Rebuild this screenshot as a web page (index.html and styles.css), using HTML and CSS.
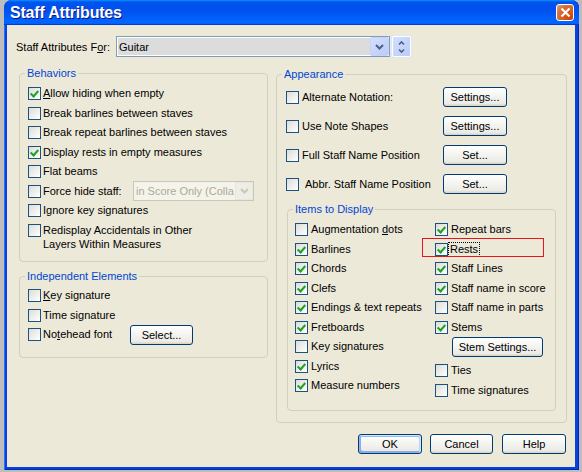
FILE: index.html
```html
<!DOCTYPE html>
<html lang="en">
<head>
    <meta charset="UTF-8">
    <title>Staff Attributes</title>
    <link rel="stylesheet" href="styles.css">
</head>
<body>

    <div class="window">
        <!-- Title bar -->
        <div class="titlebar">
            <span class="title">Staff Attributes</span>
            <span class="close">
                <svg width="11" height="11" viewBox="0 0 11 11"><path d="M1.5 1.5L9.5 9.5M9.5 1.5L1.5 9.5" stroke="#fff" stroke-width="2.2"/></svg>
            </span>
        </div>

        <div class="client">
            <!-- Staff selector -->
            <div class="for-row">
                <span class="for-label">Staff Attributes F<u>o</u>r:</span>
                <div class="combo">
                    <span class="combo-text">Guitar</span>
                    <span class="drop">
                        <svg width="9" height="6" viewBox="0 0 9 6"><path d="M1 1L4.5 4.5L8 1" fill="none" stroke="#4d6185" stroke-width="2"/></svg>
                    </span>
                </div>
                <div class="spin">
                    <svg width="9" height="14" viewBox="0 0 9 14"><path d="M2 4.5L4.5 2L7 4.5M2 9.5L4.5 12L7 9.5" fill="none" stroke="#4d6185" stroke-width="1.6"/></svg>
                </div>
            </div>

            <div class="columns">
                <!-- Left column -->
                <div class="col col-left">
                    <fieldset class="group behaviors">
                        <legend>Behaviors</legend>
                        <div class="group-body">
                            <div class="row"><span class="box on"></span><span class="txt"><u>A</u>llow hiding when empty</span></div>
                            <div class="row"><span class="box"></span><span class="txt">Break barlines between staves</span></div>
                            <div class="row"><span class="box"></span><span class="txt">Break repeat barlines between staves</span></div>
                            <div class="row"><span class="box on"></span><span class="txt">Display rests in empty measures</span></div>
                            <div class="row"><span class="box"></span><span class="txt">Flat beams</span></div>
                            <div class="row"><span class="box"></span><span class="txt force-label">Force hide staff:</span>
                                <div class="combo-off">
                                    <span class="combo-off-text">in Score Only (Colla</span>
                                    <span class="drop-off">
                                        <svg width="9" height="6" viewBox="0 0 9 6"><path d="M1 1L4.5 4.5L8 1" fill="none" stroke="#c9c7ba" stroke-width="2"/></svg>
                                    </span>
                                </div>
                            </div>
                            <div class="row"><span class="box"></span><span class="txt">Ignore key signatures</span></div>
                            <div class="row tall"><span class="box"></span><span class="txt multi">Redisplay Accidentals in Other<br>Layers Within Measures</span></div>
                        </div>
                    </fieldset>

                    <fieldset class="group independent">
                        <legend>Independent Elements</legend>
                        <div class="group-body">
                            <div class="row"><span class="box"></span><span class="txt"><u>K</u>ey signature</span></div>
                            <div class="row"><span class="box"></span><span class="txt">Time signature</span></div>
                            <div class="row"><span class="box"></span><span class="txt note-label">No<u>t</u>ehead font</span><span class="btn btn-select">Select...</span></div>
                        </div>
                    </fieldset>
                </div>

                <!-- Right column -->
                <div class="col col-right">
                    <fieldset class="group appearance">
                        <legend>Appearance</legend>
                        <div class="group-body">
                            <div class="app-rows">
                                <div class="app-row"><span class="chk"><span class="box"></span><span class="txt">Alternate Notation:</span></span><span class="btn">Settings...</span></div>
                                <div class="app-row"><span class="chk"><span class="box"></span><span class="txt">Use Note Shapes</span></span><span class="btn">Settings...</span></div>
                                <div class="app-row"><span class="chk"><span class="box"></span><span class="txt">Full Staff Name Position</span></span><span class="btn">Set...</span></div>
                                <div class="app-row"><span class="chk"><span class="box"></span><span class="txt abbr">Abbr. Staff Name Position</span></span><span class="btn">Set...</span></div>
                            </div>

                            <fieldset class="group items">
                                <legend>Items to Display</legend>
                                <div class="group-body items-grid">
                                    <div class="items-col">
                                        <div class="row"><span class="box"></span><span class="txt">Augmentation <u>d</u>ots</span></div>
                                        <div class="row"><span class="box on"></span><span class="txt">Barlines</span></div>
                                        <div class="row"><span class="box on"></span><span class="txt">Chords</span></div>
                                        <div class="row"><span class="box on"></span><span class="txt">Clefs</span></div>
                                        <div class="row"><span class="box on"></span><span class="txt">Endings &amp; text repeats</span></div>
                                        <div class="row"><span class="box on"></span><span class="txt">Fretboards</span></div>
                                        <div class="row"><span class="box"></span><span class="txt">Key signatures</span></div>
                                        <div class="row"><span class="box on"></span><span class="txt">Lyrics</span></div>
                                        <div class="row"><span class="box on"></span><span class="txt">Measure numbers</span></div>
                                    </div>
                                    <div class="items-col">
                                        <div class="row"><span class="box on"></span><span class="txt">Repeat bars</span></div>
                                        <div class="row marked"><span class="box on"></span><span class="txt focus">Rests</span><span class="mark"></span></div>
                                        <div class="row"><span class="box on"></span><span class="txt">Staff Lines</span></div>
                                        <div class="row"><span class="box on"></span><span class="txt">Staff name in score</span></div>
                                        <div class="row"><span class="box"></span><span class="txt">Staff name in parts</span></div>
                                        <div class="row"><span class="box on"></span><span class="txt">Stems</span></div>
                                        <span class="btn btn-stem">Stem Settings...</span>
                                        <div class="row"><span class="box"></span><span class="txt">Ties</span></div>
                                        <div class="row"><span class="box"></span><span class="txt">Time signatures</span></div>
                                    </div>
                                </div>
                            </fieldset>
                        </div>
                    </fieldset>
                </div>
            </div>

            <!-- Dialog buttons -->
            <div class="actions">
                <span class="btn btn-ok">OK</span>
                <span class="btn btn-cancel">Cancel</span>
                <span class="btn">Help</span>
            </div>
        </div>
    </div>

</body>
</html>
```

FILE: styles.css
```css
/* General */
* {
    box-sizing: border-box;
}

body {
    margin: 0;
    padding-left: 4px;
    height: 472px;
    overflow: hidden;
    background-color: #bdbdbd;
    font-family: "Liberation Sans", Arial, sans-serif;
    font-size: 11px;
    color: #000;
}

u {
    text-decoration-thickness: 1px;
    text-underline-offset: 1px;
}

/* Window frame */
.window {
    width: 575px;
    height: 470px;
    display: flex;
    flex-direction: column;
    background-color: #0841dc;
    border-radius: 8px 8px 0 0;
    box-shadow: inset 1px 0 #2a6ff7, inset -1px 0 #0028b8, inset 0 -1px #0028b8;
}

.titlebar {
    height: 25px;
    flex: none;
    display: flex;
    align-items: center;
    justify-content: space-between;
    padding: 0 5px 0 6px;
    border-radius: 8px 8px 0 0;
    background: linear-gradient(180deg, #0997ff, #0053ee 8%, #0050ee 40%, #0066ff 88%, #0066ff 93%, #005bff 95%, #003dd7 96%, #003dd7);
}

.title {
    color: #fff;
    font-weight: bold;
    font-size: 16px;
    letter-spacing: -0.2px;
    text-shadow: 1px 1px #0f1089;
}

.close {
    width: 18px;
    height: 17px;
    display: flex;
    align-items: center;
    justify-content: center;
    border: 1px solid #fff;
    border-radius: 3px;
    background: radial-gradient(circle at 85% 85%, #cc4600 0%, #dc6527 55%, #cd7546 70%, #f0a07e 100%);
}

.client {
    flex: 1;
    display: flex;
    flex-direction: column;
    margin: 0 4px 3px 3px;
    padding-top: 11px;
    background-color: #ece9d8;
}

/* Staff selector row */
.for-row {
    display: flex;
    align-items: center;
    height: 21px;
    margin-left: 9px;
}

.for-label {
    width: 100px;
}

.combo {
    width: 274px;
    height: 21px;
    display: flex;
    align-items: center;
    border: 1px solid #7f9db9;
    background-color: #dcdcdc;
    box-shadow: inset 0 0 0 1px #fff;
}

.combo-text {
    flex: 1;
    padding-left: 2px;
}

.drop {
    width: 19px;
    height: 19px;
    display: flex;
    align-items: center;
    justify-content: center;
    border: 1px solid #c3d3fd;
    border-radius: 2px;
    background: linear-gradient(135deg, #d4e0fd, #b9cbf7);
}

.spin {
    width: 19px;
    height: 21px;
    margin-left: 2px;
    display: flex;
    align-items: center;
    justify-content: center;
    border: 1px solid #fff;
    border-radius: 2px;
    background: linear-gradient(135deg, #d4e0fd, #b9cbf7);
    box-shadow: 0 0 0 1px #dfe6f6;
}

/* Columns */
.columns {
    display: grid;
    grid-template-columns: 249px 291px;
    column-gap: 8px;
    align-items: start;
    margin: 10px 0 0 12px;
}

.col-right {
    margin-top: 1px;
}

/* Group boxes */
.group {
    margin: 0;
    padding: 0;
    min-width: 0;
    border: 1px solid #d0d0bf;
    border-radius: 4px;
}

.group legend {
    margin-left: 5px;
    padding: 0 2px;
    line-height: 13px;
    color: #0046d5;
}

.behaviors .group-body {
    padding: 4px 0 10px 8px;
}

.independent {
    margin-top: 8px;
}

.independent .group-body {
    padding: 3px 0 12px 8px;
}

.appearance .group-body {
    padding: 6px 10px 11px 9px;
}

.items {
    margin: 9px 0 0 1px;
}

.items .group-body {
    padding: 4px 0 10px 7px;
}

/* Checkbox rows */
.row {
    display: flex;
    align-items: center;
    height: 19.5px;
}

.row.tall {
    height: auto;
    align-items: flex-start;
    padding-top: 3px;
}

.box {
    width: 13px;
    height: 13px;
    flex: none;
    position: relative;
    border: 1px solid #1c5180;
    background: linear-gradient(135deg, #dcdcd7, #fff);
}

.box.on::after {
    content: "";
    position: absolute;
    left: 3px;
    top: 1px;
    width: 3px;
    height: 6px;
    border: solid #21a121;
    border-width: 0 2px 2px 0;
    transform: rotate(42deg);
}

.txt {
    margin-left: 3px;
    line-height: 13px;
    white-space: nowrap;
}

.col-left .txt {
    margin-left: 2px;
}

.txt.multi {
    line-height: 14px;
    margin-top: -0.5px;
}

.force-label {
    width: 90px;
}

.note-label {
    width: 87px;
}

/* Disabled dropdown */
.combo-off {
    width: 121px;
    height: 20px;
    display: flex;
    align-items: center;
    border: 1px solid #c9c7ba;
    background-color: #f5f4ea;
}

.combo-off-text {
    flex: 1;
    white-space: nowrap;
    padding-left: 2px;
    color: #aca899;
}

.drop-off {
    width: 18px;
    height: 18px;
    flex: none;
    display: flex;
    align-items: center;
    justify-content: center;
    border: 1px solid #e8e7df;
    background-color: #efeee6;
}

/* Appearance rows */
.app-rows {
    display: flex;
    flex-direction: column;
    gap: 9px;
}

.app-row {
    display: grid;
    grid-template-columns: 157px 64px;
    align-items: center;
    height: 20px;
}

.chk {
    display: flex;
    align-items: center;
}

.txt.abbr {
    margin-left: 6px;
}

/* Items grid */
.items-grid {
    display: grid;
    grid-template-columns: 140px 1fr;
}

.marked {
    position: relative;
}

.focus {
    margin-left: 1px;
    padding: 0 1px;
    outline: 1px dotted #000;
}

.mark {
    position: absolute;
    left: -13px;
    top: -2px;
    width: 122px;
    height: 19px;
    border: 1px solid #e8141a;
}

/* Buttons */
.btn {
    width: 64px;
    height: 20px;
    display: flex;
    align-items: center;
    justify-content: center;
    border: 1px solid #003c74;
    border-radius: 3px;
    background: linear-gradient(180deg, #fff, #f4f4f0 45%, #ecebe6 86%, #d6d0c5);
    white-space: nowrap;
}

.btn-select {
    width: 63px;
}

.btn-stem {
    width: 91px;
    margin: 0 0 4px 17px;
}

.actions {
    display: flex;
    justify-content: flex-end;
    gap: 8px;
    margin-top: auto;
    margin-bottom: 13px;
    padding-right: 9px;
}

.btn-cancel {
    width: 63px;
    margin-right: 1px;
}

.btn-ok {
    box-shadow: inset -1px 1px #cee7ff, inset 1px 2px #98b8ea, inset -2px 2px #bcd4f6, inset 1px -1px #89ade4, inset 2px -2px #89ade4;
}
```
